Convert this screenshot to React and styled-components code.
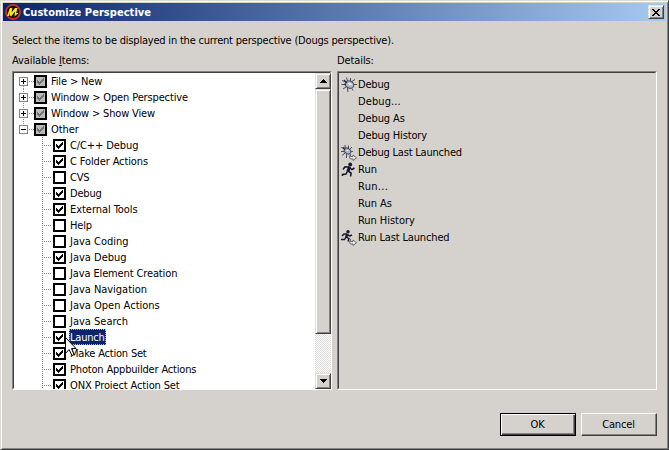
import React from 'react';
import styled, { createGlobalStyle, css } from 'styled-components';

const Global = createGlobalStyle`
  * { box-sizing: border-box; }
  body { margin: 0; background: #d5d2cd; overflow: hidden; }
`;

const face = '#d5d2cd';

const raised = css`
  background: ${face};
  border: 1px solid;
  border-color: #e4e1dc #404040 #404040 #e4e1dc;
  box-shadow: inset 1px 1px #fff, inset -1px -1px #858380;
`;

const Dialog = styled.div`
  width: 669px;
  height: 450px;
  display: flex;
  flex-direction: column;
  padding: 1px;
  background: ${face};
  border: 1px solid;
  border-color: #dedbd6 #404040 #404040 #dedbd6;
  box-shadow: inset 1px 1px #fff, inset -1px -1px #858380;
  font: 11px/16px 'DejaVu Sans Condensed', 'DejaVu Sans', Tahoma, sans-serif;
  font-stretch: condensed;
  color: #000;
  cursor: default;
`;

const TitleBar = styled.header`
  height: 18px;
  margin: 1px 1px 0;
  padding: 0 2px;
  display: flex;
  align-items: center;
  flex-shrink: 0;
  background: linear-gradient(90deg, #0a246a, #a6caf0);
`;

const Title = styled.h1`
  flex: 1;
  margin: 0 0 0 2px;
  color: #fff;
  font-size: 11px;
  font-weight: bold;
  line-height: 19px;
  letter-spacing: 0.05px;
  white-space: nowrap;
`;

const CloseButton = styled.button`
  ${raised}
  width: 16px;
  height: 14px;
  padding: 0;
  display: grid;
  place-items: center;
`;

const Message = styled.p`
  margin: 12px 0 0 10px;
  height: 16px;
  white-space: nowrap;
  letter-spacing: -0.2px;
`;

const Columns = styled.main`
  display: grid;
  grid-template-columns: 320px 320px;
  column-gap: 5px;
  margin: 4px 0 0 10px;
`;

const Caption = styled.div`
  height: 18px;
  line-height: 16px;
  letter-spacing: -0.1px;
`;

const Panel = styled.section`
  height: 319px;
  display: flex;
  overflow: hidden;
  background: ${p => (p.$plain ? face : '#fff')};
  border: 1px solid;
  border-color: #858380 #fff #fff #858380;
  position: relative;
  &::before {
    content: '';
    position: absolute;
    inset: 0;
    pointer-events: none;
    border: 1px solid;
    border-color: #404040 transparent transparent #404040;
  }
`;

const Tree = styled.ul`
  flex: 1;
  list-style: none;
  margin: 0;
  padding: 1px 0 0 1px;
`;

const Row = styled.li`
  height: 16px;
  display: flex;
  align-items: center;
  white-space: nowrap;
`;

const Guides = styled.svg`
  flex: none;
  display: block;
`;

const Box = styled.span`
  flex: none;
  width: 13px;
  height: 13px;
  margin-top: 1px;
  border: 2px solid #000;
  background: ${p => (p.$grey ? '#b9b9b9' : '#fff')};
  display: grid;
  place-items: center;
`;

const Label = styled.span`
  height: 16px;
  margin-left: 3px;
  padding: 1px 1px 0;
  line-height: 16px;
  letter-spacing: ${p => p.$track || 0}px;
  ${p => p.$selected && css`
    background: #0a246a;
    color: #fff;
    outline: 1px dotted #d8b060;
    outline-offset: -1px;
  `}
`;

const ScrollBar = styled.div`
  width: 16px;
  margin-top: 1px;
  display: flex;
  flex-direction: column;
  background: repeating-conic-gradient(#fff 0 25%, #dedcd8 0 50%) 0 0 / 2px 2px;
`;

const Arrow = styled.div`
  ${raised}
  height: 16px;
  display: grid;
  place-items: center;
`;

const Thumb = styled.div`
  ${raised}
  height: 245px;
`;

const Track = styled.div`
  flex: 1;
`;

const Details = styled.ul`
  list-style: none;
  margin: 0;
  padding: 4px 0 0 3px;
`;

const Detail = styled.li`
  height: 17px;
  display: flex;
  align-items: center;
  white-space: nowrap;
  letter-spacing: ${p => p.$track || 0}px;
`;

const IconSlot = styled.span`
  width: 16px;
  height: 16px;
  margin-right: 1px;
`;

const Actions = styled.footer`
  display: flex;
  justify-content: flex-end;
  gap: 5px;
  margin: 23px 10px 0 0;
`;

const Button = styled.button`
  width: 76px;
  height: 23px;
  padding: 0 1px 0 0;
  font: inherit;
  letter-spacing: -0.15px;
  color: #000;
  ${raised}
  border-color: #fff #404040 #404040 #fff;
  box-shadow: inset -1px -1px #858380;
  ${p => p.$primary && css`
    border-color: #000;
    box-shadow: inset 1px 1px #fff, inset -1px -1px #404040, inset -2px -2px #858380;
  `}
`;

const Pointer = styled.svg`
  position: absolute;
  left: 64px;
  top: 336px;
`;

const Tick = ({ grey }) => (
  <svg width="9" height="9" viewBox="0 0 9 9" shapeRendering="crispEdges">
    <path
      d="M1 3h1v3h-1zM2 4h1v3h-1zM3 5h1v3h-1zM4 4h1v3h-1zM5 3h1v3h-1zM6 2h1v3h-1zM7 1h1v3h-1z"
      fill={grey ? '#777' : '#000'}
    />
  </svg>
);

const RootGuides = ({ open, first }) => (
  <Guides width="20" height="16" shapeRendering="crispEdges">
    <path d={first ? 'M9.5 13v3' : open ? 'M9.5 0v4' : 'M9.5 0v16'} stroke="#888" strokeDasharray="1 1" />
    <path d="M15 8.5h5" stroke="#888" strokeDasharray="1 1" />
    <rect x="5.5" y="4.5" width="8" height="8" fill="#fff" stroke="#858380" />
    <path d={open ? 'M7 8.5h5' : 'M7 8.5h5M9.5 6v5'} stroke="#000" />
  </Guides>
);

const ChildGuides = () => (
  <Guides width="39" height="16" shapeRendering="crispEdges">
    <path d="M28.5 0v16M30 8.5h8" stroke="#888" strokeDasharray="1 1" />
  </Guides>
);

const Bug = () => (
  <svg width="16" height="16" viewBox="0 0 16 16" fill="none">
    <path
      d="M5.500 0.500l1 3.500M9.500 1v3M1 3.500l4 1.500M0.500 7.500h3.500M2 12l3-2M6.500 11l.5 4M10.500 11l1.500 2.500M11 4.500l3-2M13 7.500h3"
      stroke="#4b4e63"
    />
    <ellipse cx="8.500" cy="7.500" rx="4.500" ry="3.500" fill="#b4b6c4" stroke="#44475c" transform="rotate(25 8.5 7.5)" />
    <path d="M7 6.500h3M8 7.500h3" stroke="#eceef4" />
    <path d="M3 3l3 3M3 7l2 1" stroke="#2b2e42" strokeWidth="1.300" />
  </svg>
);

const SmallArrow = () => (
  <path d="M9.500 9v2.500h2.500v-1.500l3.500 2.800-3.500 2.700v-1.500h-2.500l-1-2z" fill="#e8e8ea" stroke="#66676f" />
);

const BugLast = () => (
  <svg width="16" height="16" viewBox="0 0 16 16" fill="none">
    <path d="M4 0v3M7.500 0.500v2.500M0 2.500l4 1.500M0 6.500h3M1 10.500l3-2.500M5.500 9v4M9 4l2-2M10 6.500h2" stroke="#4b4e63" />
    <ellipse cx="6.500" cy="6" rx="3.600" ry="2.600" fill="#b4b6c4" stroke="#44475c" transform="rotate(35 6.5 6)" />
    <path d="M5.500 5.500h2" stroke="#fff" />
    <path d="M2 2l2 3" stroke="#2b2e42" strokeWidth="1.300" />
    <SmallArrow />
  </svg>
);

const Runner = () => (
  <svg width="16" height="16" viewBox="0 0 16 16" fill="none">
    <circle cx="9.200" cy="2.500" r="1.900" fill="#17182c" />
    <path d="M8.500 4.500L7 9.500" stroke="#17182c" strokeWidth="3" />
    <path d="M8 5.200L4 4.800 2 7.500M9 6l2 1.500 2.500-1.500M7 9l3.200 2-.7 3.500M6.500 9L5 12 1.500 12.500V14" stroke="#17182c" strokeWidth="1.500" />
  </svg>
);

const RunnerLast = () => (
  <svg width="16" height="16" viewBox="0 0 16 16" fill="none">
    <circle cx="7" cy="1.800" r="1.700" fill="#17182c" />
    <path d="M6.500 4L5 7" stroke="#17182c" strokeWidth="2.500" />
    <path d="M6 4H3L1 6M7 5l2 1 2-1M5 7l3 1.500-1 3M5 7L3.500 9.500H0" stroke="#17182c" strokeWidth="1.400" />
    <SmallArrow />
  </svg>
);

const Logo = () => (
  <svg width="16" height="16" viewBox="0 0 16 16">
    <circle cx="8" cy="8" r="7.100" fill="#180c08" stroke="#dc2a22" strokeWidth="1.700" />
    <path d="M2 12L5 4h2.300L6.600 8.500 10 4h2.500L11.200 9H13.500l-4 3.500.6-5L6 12.500l-1-1V8.500l-1 3.500z" fill="#f8ec18" />
  </svg>
);

const Triangle = ({ down }) => (
  <svg width="7" height="4" shapeRendering="crispEdges">
    <path d={down ? 'M0 0h7v1h-1v1h-1v1h-1v1h-1v-1h-1v-1h-1v-1h-1z' : 'M3 0h1v1h1v1h1v1h1v1h-7v-1h1v-1h1v-1h1z'} />
  </svg>
);

const roots = [
  ['File > New', -0.15],
  ['Window > Open Perspective', -0.14],
  ['Window > Show View', -0.17],
  ['Other', -0.05],
];

const children = [
  ['C/C++ Debug', true, -0.1],
  ['C Folder Actions', true, -0.12],
  ['CVS', false, -0.2],
  ['Debug', true, -0.2],
  ['External Tools', true, -0.05],
  ['Help', false, -0.2],
  ['Java Coding', false, 0],
  ['Java Debug', true, 0],
  ['Java Element Creation', false, -0.13],
  ['Java Navigation', false, -0.03],
  ['Java Open Actions', false, 0],
  ['Java Search', false, 0],
  ['Launch', true, -0.2],
  ['Make Action Set', true, -0.2],
  ['Photon Appbuilder Actions', true, -0.18],
  ['QNX Project Action Set', true, -0.13],
];

const details = [
  ['Debug', Bug, -0.2],
  ['Debug...', null, 0.1],
  ['Debug As', null, -0.1],
  ['Debug History', null, -0.15],
  ['Debug Last Launched', BugLast, -0.2],
  ['Run', Runner, 0],
  ['Run...', null, 0.3],
  ['Run As', null, 0],
  ['Run History', null, -0.05],
  ['Run Last Launched', RunnerLast, -0.15],
];

export default function App() {
  return (
    <Dialog>
      <Global />
      <TitleBar>
        <Logo />
        <Title>Customize Perspective</Title>
        <CloseButton aria-label="Close">
          <svg width="8" height="7" shapeRendering="crispEdges">
            <path d="M0 0h2v1h1v1h2v-1h1v-1h2v1h-1v1h-1v1h-1v1h1v1h1v1h1v1h-2v-1h-1v-1h-2v1h-1v1h-2v-1h1v-1h1v-1h1v-1h-1v-1h-1v-1h-1z" />
          </svg>
        </CloseButton>
      </TitleBar>
      <Message>Select the items to be displayed in the current perspective (Dougs perspective).</Message>
      <Columns>
        <div>
          <Caption>Available <u>I</u>tems:</Caption>
          <Panel>
            <Tree>
              {roots.map(([name, track], i) => (
                <Row key={name}>
                  <RootGuides open={i === 3} first={i === 0} />
                  <Box $grey><Tick grey /></Box>
                  <Label $track={track}>{name}</Label>
                </Row>
              ))}
              {children.map(([name, checked, track]) => (
                <Row key={name}>
                  <ChildGuides />
                  <Box>{checked && <Tick />}</Box>
                  <Label $track={track} $selected={name === 'Launch'}>{name}</Label>
                </Row>
              ))}
            </Tree>
            <ScrollBar>
              <Arrow><Triangle /></Arrow>
              <Thumb />
              <Track />
              <Arrow><Triangle down /></Arrow>
            </ScrollBar>
          </Panel>
        </div>
        <div>
          <Caption>Details:</Caption>
          <Panel $plain>
            <Details>
              {details.map(([name, Icon, track]) => (
                <Detail key={name} $track={track}>
                  <IconSlot>{Icon && <Icon />}</IconSlot>
                  {name}
                </Detail>
              ))}
            </Details>
          </Panel>
        </div>
      </Columns>
      <Actions>
        <Button $primary>OK</Button>
        <Button>Cancel</Button>
      </Actions>
      <Pointer width="14" height="22" viewBox="0 0 14 22">
        <path d="M1.500 1.500v16l3.500-4 3 6 2-1-2.500-6h4.500z" fill="#fff" stroke="#000" />
      </Pointer>
    </Dialog>
  );
}
